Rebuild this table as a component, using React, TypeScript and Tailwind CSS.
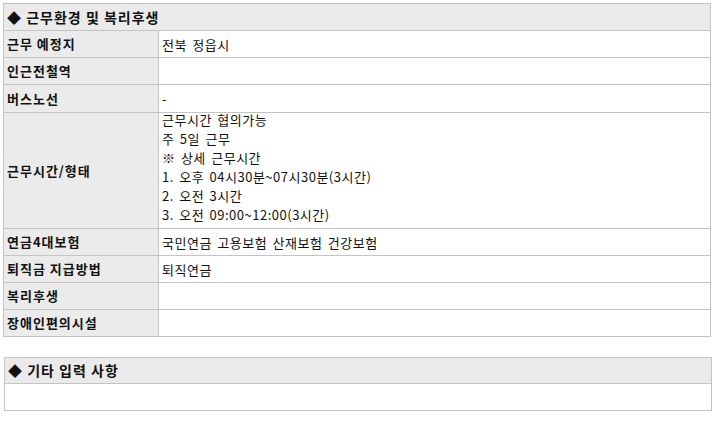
const rows: { label: string; value: string[]; h: string }[] = [
  { label: '근무 예정지', value: ['전북 정읍시'], h: 'h-[27px]' },
  { label: '인근전철역', value: [], h: 'h-[27px]' },
  { label: '버스노선', value: ['-'], h: 'h-[28px]' },
  {
    label: '근무시간/형태',
    value: [
      '근무시간 협의가능',
      '주 5일 근무',
      '※ 상세 근무시간',
      '1. 오후 04시30분~07시30분(3시간)',
      '2. 오전 3시간',
      '3. 오전 09:00~12:00(3시간)',
    ],
    h: 'h-[116px] pb-[7px]',
  },
  { label: '연금4대보험', value: ['국민연금 고용보험 산재보험 건강보험'], h: 'h-[27px]' },
  { label: '퇴직금 지급방법', value: ['퇴직연금'], h: 'h-[27px]' },
  { label: '복리후생', value: [], h: 'h-[27px]' },
  { label: '장애인편의시설', value: [], h: 'h-[27px]' },
];

export default function App() {
  return (
    <div
      className="w-[720px] h-[421px] bg-white text-[13px] text-[#111] pt-[3px] pl-[3px]"
      style={{ fontFamily: '"Noto Sans CJK KR", "Noto Sans", sans-serif' }}
    >
      {/* 근무환경 및 복리후생 */}
      <div className="w-[708px] border-t border-l border-[#c4c4c4]">
        <div className="flex h-[27px] items-center bg-[#eaeaea] border-r border-b border-[#c4c4c4] pl-[3px] text-[14px] font-bold tracking-[1px]">
          ◆ 근무환경 및 복리후생
        </div>
        {rows.map((r) => (
          <div key={r.label} className="flex">
            <div
              className={`${r.h.split(' ')[0]} w-[155px] shrink-0 flex items-center bg-[#ebebeb] border-r border-b border-[#c4c4c4] pl-[3px] font-bold tracking-[1px]`}
            >
              {r.label}
            </div>
            <div
              className={`${r.h} flex-1 flex flex-col justify-center border-r border-b border-[#c4c4c4] pl-[3px] leading-[19px] tracking-[0.5px] [word-spacing:2px]`}
            >
              {r.value.map((v) => (
                <div key={v}>{v}</div>
              ))}
            </div>
          </div>
        ))}
      </div>

      {/* 기타 입력 사항 */}
      <div className="mt-[20px] ml-[1px] w-[708px] border-t border-l border-[#c4c4c4]">
        <div className="flex h-[26px] items-center bg-[#eaeaea] border-r border-b border-[#c4c4c4] pl-[3px] text-[14px] font-bold tracking-[1px]">
          ◆ 기타 입력 사항
        </div>
        <div className="h-[27px] border-r border-b border-[#c4c4c4]" />
      </div>
    </div>
  );
}
